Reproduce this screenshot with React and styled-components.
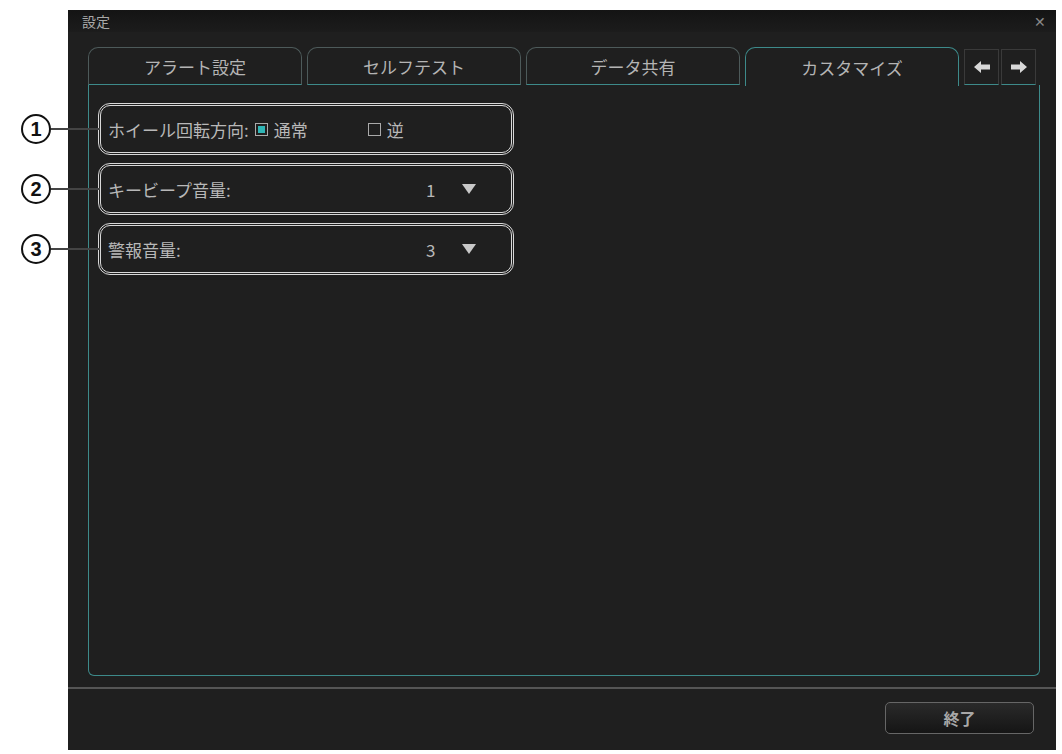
import React from 'react';
import styled, { createGlobalStyle } from 'styled-components';

const Global = createGlobalStyle`
  body { margin: 0; background: #fff; font-family: "Noto Sans CJK JP", "Noto Sans", sans-serif; }
`;

const Page = styled.div`
  position: relative;
  width: 1062px;
  height: 754px;
  padding: 10px 6px 4px 68px;
  box-sizing: border-box;
`;

const Dialog = styled.div`
  width: 988px;
  height: 740px;
  background: #1f1f1f;
  display: flex;
  flex-direction: column;
  box-sizing: border-box;
`;

const TitleBar = styled.div`
  height: 22px;
  display: flex;
  align-items: center;
  justify-content: space-between;
  padding: 0 10px 0 14px;
  background: linear-gradient(#141414, #1c1c1c);
  color: #a8a8a8;
  font-size: 14px;
`;

const Close = styled.span`
  color: #888;
  font-size: 14px;
`;

const TabRow = styled.div`
  display: flex;
  align-items: flex-end;
  gap: 5px;
  padding: 15px 0 0 20px;
  height: 53px;
  box-sizing: border-box;
`;

const Tab = styled.div`
  width: 214px;
  height: ${p => (p.$active ? 39 : 38)}px;
  box-sizing: border-box;
  border: 1px solid ${p => (p.$active ? '#3d8a8a' : '#4d5a5a')};
  border-bottom: ${p => (p.$active ? 'none' : '1px solid #3d8a8a')};
  border-radius: 10px 10px 0 0;
  background: #1f1f1f;
  color: #b4b4b4;
  font-size: 17px;
  display: flex;
  align-items: center;
  justify-content: center;
  margin-bottom: ${p => (p.$active ? -1 : 0)}px;
`;

const ArrowBox = styled.div`
  width: 35px;
  height: 36px;
  border: 1px solid #3a3a3a;
  border-bottom: 1px solid #3d8a8a;
  display: flex;
  align-items: center;
  justify-content: center;
  box-sizing: border-box;
  margin-left: ${p => (p.$first ? 0 : -3)}px;
`;

const Panel = styled.div`
  margin: 0 16px 0 20px;
  height: 591px;
  border: 1px solid #3d8a8a;
  border-top: none;
  border-radius: 0 0 6px 6px;
  padding: 18px 0 0 9px;
  display: flex;
  flex-direction: column;
  gap: 8px;
  box-sizing: border-box;
`;

const Row = styled.div`
  position: relative;
  width: 416px;
  height: 52px;
  box-sizing: border-box;
  border: 3px double #d8d8d8;
  border-radius: 12px;
  display: flex;
  align-items: center;
  padding: 0 7px;
  color: #b8b8b8;
  font-size: 17px;
  gap: 6px;
`;

const Callout = styled.div`
  position: absolute;
  left: -80px;
  top: 50%;
  transform: translateY(-50%);
  display: flex;
  align-items: center;
`;

const Circle = styled.span`
  width: 26px;
  height: 26px;
  border: 2.5px solid #111;
  border-radius: 50%;
  background: #fff;
  color: #111;
  font-family: "Liberation Sans", sans-serif;
  font-weight: bold;
  font-size: 20px;
  display: flex;
  align-items: center;
  justify-content: center;
`;

const Line = styled.span`
  width: 49px;
  height: 2px;
  background: #444;
`;

const Check = styled.span`
  width: 11px;
  height: 11px;
  border: 1px solid #aaa;
  background: ${p => (p.$on ? '#2fb5b5' : 'transparent')};
  box-shadow: ${p => (p.$on ? 'inset 0 0 0 2px #1f1f1f' : 'none')};
  margin-left: ${p => p.$gap || 0}px;
`;

const Value = styled.span`
  margin-left: auto;
  width: 30px;
`;

const Tri = styled.span`
  width: 0;
  height: 0;
  border-left: 7px solid transparent;
  border-right: 7px solid transparent;
  border-top: 10px solid #c8c8c8;
  margin-right: 28px;
`;

const Footer = styled.div`
  margin-top: 11px;
  border-top: 2px solid #555;
  flex: 1;
  display: flex;
  justify-content: flex-end;
  align-items: flex-start;
  padding: 13px 22px 0 0;
`;

const Button = styled.button`
  width: 149px;
  height: 32px;
  border: 1px solid #666;
  border-radius: 5px;
  background: linear-gradient(#2a2a2a, #151515);
  color: #a8a8a8;
  font-family: inherit;
  font-size: 16px;
  font-weight: bold;
`;

const Arrow = ({ dir }) => (
  <svg width="18" height="14" viewBox="0 0 18 14">
    <path
      d={dir === 'l' ? 'M1 7 L8 1 V4.5 H17 V9.5 H8 V13 Z' : 'M17 7 L10 1 V4.5 H1 V9.5 H10 V13 Z'}
      fill="#d8d8d8"
    />
  </svg>
);

const Num = ({ n }) => (
  <Callout>
    <Circle>{n}</Circle>
    <Line />
  </Callout>
);

export default function App() {
  return (
    <Page>
      <Global />
      <Dialog>
        <TitleBar>
          <span>設定</span>
          <Close>✕</Close>
        </TitleBar>
        <TabRow>
          <Tab>アラート設定</Tab>
          <Tab>セルフテスト</Tab>
          <Tab>データ共有</Tab>
          <Tab $active>カスタマイズ</Tab>
          <ArrowBox $first><Arrow dir="l" /></ArrowBox>
          <ArrowBox><Arrow dir="r" /></ArrowBox>
        </TabRow>
        <Panel>
          <Row>
            <Num n="1" />
            ホイール回転方向:
            <Check $on />
            <span>通常</span>
            <Check $gap={54} />
            <span>逆</span>
          </Row>
          <Row>
            <Num n="2" />
            キービープ音量:
            <Value>1</Value>
            <Tri />
          </Row>
          <Row>
            <Num n="3" />
            警報音量:
            <Value>3</Value>
            <Tri />
          </Row>
        </Panel>
        <Footer>
          <Button>終了</Button>
        </Footer>
      </Dialog>
    </Page>
  );
}
